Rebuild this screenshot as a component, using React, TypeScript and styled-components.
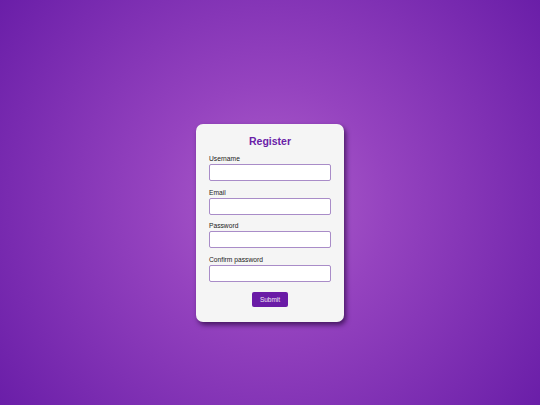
import styled, { createGlobalStyle } from "styled-components";

const GlobalStyle = createGlobalStyle`
  html, body {
    margin: 0;
    padding: 0;
  }
  body {
    font-family: "Liberation Sans", Arial, sans-serif;
  }
`;

const Page = styled.div`
  width: 540px;
  height: 405px;
  box-sizing: border-box;
  padding-top: 124px;
  display: flex;
  justify-content: center;
  align-items: flex-start;
  background: radial-gradient(circle at 50% 50%, #ad5ecb 0%, #9543bf 35%, #6a1ea8 100%);
`;

const Card = styled.form`
  width: 148px;
  box-sizing: border-box;
  padding: 11px 13px 15px;
  background-color: #f5f5f5;
  border-radius: 7px;
  box-shadow: 2px 3px 5px rgba(30, 0, 50, 0.65);
  display: flex;
  flex-direction: column;
`;

const Title = styled.h2`
  margin: 0 0 8px;
  font-size: 10.5px;
  line-height: 12px;
  font-weight: bold;
  color: #6b21a8;
  text-align: center;
`;

const Fields = styled.div`
  display: flex;
  flex-direction: column;
  gap: 7.5px;
`;

const Field = styled.div`
  display: flex;
  flex-direction: column;
  gap: 1px;
`;

const Label = styled.label`
  font-size: 6.7px;
  line-height: 8px;
  color: #1a1a1a;
`;

const Input = styled.input`
  box-sizing: border-box;
  width: 100%;
  height: 17px;
  margin: 0;
  padding: 0 4px;
  background: #ffffff;
  border: 1px solid #a98cc8;
  border-radius: 2px;
  outline: none;
  font-size: 7px;
`;

const Submit = styled.button`
  align-self: center;
  margin-top: 10.5px;
  width: 36px;
  height: 15px;
  padding: 0;
  border: none;
  border-radius: 2px;
  background-color: #6a1ba6;
  color: #eee6f5;
  font-family: "Liberation Sans", Arial, sans-serif;
  font-size: 6.5px;
  cursor: pointer;
`;

const fields = [
  { id: "username", label: "Username", type: "text" },
  { id: "email", label: "Email", type: "email" },
  { id: "password", label: "Password", type: "password" },
  { id: "confirm", label: "Confirm password", type: "password" },
];

const App = () => {
  return (
    <>
      <GlobalStyle />
      <Page>
        <Card onSubmit={(e) => e.preventDefault()}>
          <Title>Register</Title>
          <Fields>
            {fields.map((f) => (
              <Field key={f.id}>
                <Label htmlFor={f.id}>{f.label}</Label>
                <Input id={f.id} type={f.type} />
              </Field>
            ))}
          </Fields>
          <Submit type="submit">Submit</Submit>
        </Card>
      </Page>
    </>
  );
};

export default App;
